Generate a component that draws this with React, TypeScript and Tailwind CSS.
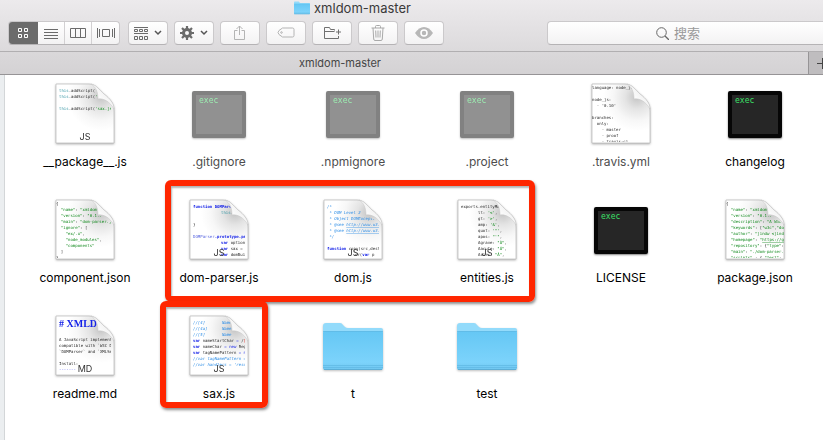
import type { ReactNode } from "react";

type Part = [text: string, color?: string, variant?: "bold" | "italic" | "underline"];
type Line = { x?: number; parts: Part[] };

type Preview = {
  x: number;
  y: number;
  right: number;
  lines: Line[];
  heading?: string;
  badge?: string;
};

type Item = {
  name: string;
  kind: "page" | "exec" | "folder";
  hidden?: boolean;
  preview?: Preview;
};

const INK = "#2a2a2a";
const GREEN = "#128a1e";
const BLUE = "#1522e8";
const SKY = "#2f8ee6";
const TEAL = "#3a97a5";

const blank: Line = { parts: [] };
const line = (...parts: Part[]): Line => ({ parts });
const at = (x: number, ...parts: Part[]): Line => ({ x, parts });

const items: Item[] = [
  {
    name: "__package__.js",
    kind: "page",
    preview: {
      x: 4, y: 9, right: 56, badge: "JS",
      lines: [
        line(["this", TEAL], [".addScript("], ["'\\", GREEN]),
        line(["this", TEAL], [".addScript("], ["'\\___.", GREEN]),
        blank,
        line(["this", TEAL], [".addScript("], ["'sax.js'", GREEN]),
      ],
    },
  },
  { name: ".gitignore", kind: "exec", hidden: true },
  { name: ".npmignore", kind: "exec", hidden: true },
  { name: ".project", kind: "exec", hidden: true },
  {
    name: ".travis.yml",
    kind: "page",
    hidden: true,
    preview: {
      x: 1, y: 6, right: 59,
      lines: [
        line(["language: node_js"]), blank,
        line(["node_js:"]), line(["  - '0.10'"]), blank,
        line(["branches:"]), line(["  only:"]), line(["    - master"]),
        line(["    - proof"]), line(["    - travis-ci"]),
      ],
    },
  },
  { name: "changelog", kind: "exec" },
  {
    name: "component.json",
    kind: "page",
    preview: {
      x: 1, y: 6, right: 59,
      lines: [
        line(["{"]),
        line(['  "name"', GREEN], [": "], ['"xmldom"', GREEN]),
        line(['  "version"', GREEN], [": "], ['"0.1.15"', GREEN], [","]),
        line(['  "main"', GREEN], [": "], ['"dom-parser.js"', GREEN]),
        line(['  "ignore"', GREEN], [": ["]),
        line(['    "ex/.x"', GREEN], [","]),
        line(['    "node_modules"', GREEN], [","]),
        line(['    "components"', GREEN]),
        line(["  ]"]),
        line(["}"]),
      ],
    },
  },
  {
    name: "dom-parser.js",
    kind: "page",
    preview: {
      x: 4, y: 9, right: 56, badge: "JS",
      lines: [
        line(["function DOMParser", BLUE, "bold"]),
        at(32, ["this", TEAL], [".options"]),
        blank,
        line(["}"]),
        blank,
        line(["DOMParser", "#5a68e0"], [".prototype.pa", BLUE, "bold"]),
        at(32, ["var", BLUE, "bold"], [" option"]),
        at(32, ["var", BLUE, "bold"], [" sax = "]),
        at(32, ["var", BLUE, "bold"], [" domBui"]),
      ],
    },
  },
  {
    name: "dom.js",
    kind: "page",
    preview: {
      x: 4, y: 9, right: 56, badge: "JS",
      lines: [
        line(["/*", SKY, "italic"]),
        line([" * DOM Level 2", SKY, "italic"]),
        line([" * Object DOMException", SKY, "italic"]),
        line([" * @see ", SKY, "italic"], ["http://www.w3.", SKY, "underline"]),
        line([" * @see ", SKY, "italic"], ["http://www.w3.", SKY, "underline"]),
        line([" */", SKY, "italic"]),
        blank,
        line(["function", BLUE, "bold"], [" copy(src,dest"]),
        at(32, ["or("], ["var", BLUE, "bold"], [" p "]),
      ],
    },
  },
  {
    name: "entities.js",
    kind: "page",
    preview: {
      x: 4, y: 9, right: 56, badge: "JS",
      lines: [
        line(["exports.entityMap"]),
        at(21, ["lt: "], ["'<'", GREEN], [","]),
        at(21, ["gt: "], ["'>'", GREEN], [","]),
        at(21, ["amp: "], ["'&'", GREEN], [","]),
        at(21, ["quot: "], ["'\"'", GREEN], [","]),
        at(21, ["apos: "], ['"\'"', GREEN], [","]),
        at(21, ["Agrave: "], ['"À"', GREEN], [","]),
        at(21, ["Aacute: "], ['"Á"', GREEN], [","]),
        at(21, ["Acirc: "], ['"Â"', GREEN], [","]),
      ],
    },
  },
  { name: "LICENSE", kind: "exec" },
  {
    name: "package.json",
    kind: "page",
    preview: {
      x: 1, y: 6, right: 59,
      lines: [
        line(["{"]),
        line(['  "name"', GREEN], [": "], ['"xmldom"', GREEN]),
        line(['  "version"', GREEN], [": "], ['"0.1.18"', GREEN], [","]),
        line(['  "description"', GREEN], [": "], ['"A W3C', GREEN]),
        line(['  "keywords"', GREEN], [": ["], ['"w3c"', GREEN], [","], ['"do', GREEN]),
        line(['  "author"', GREEN], [": "], ['"jindw <jind', GREEN]),
        line(['  "homepage"', GREEN], [": "], ['"', GREEN], ["https://g", GREEN, "underline"]),
        line(['  "repository"', GREEN], [": {"], ['"type"', GREEN], [":"]),
        line(['  "main"', GREEN], [": "], ['"./dom-parser.', GREEN]),
        line(['  "scripts"', GREEN], [" : { "], ['"test"', GREEN], [":"]),
      ],
    },
  },
  {
    name: "readme.md",
    kind: "page",
    preview: {
      x: 4, y: 26, right: 56, badge: "MD", heading: "# XMLDOM",
      lines: [
        line(["A JavaScript implement"]),
        line(["compatible with `W3C D"]),
        line(["`DOMParser` and `XMLSe"]),
        blank,
        line(["Install:"]),
        line(["-------", BLUE]),
      ],
    },
  },
  {
    name: "sax.js",
    kind: "page",
    preview: {
      x: 4, y: 9, right: 56, badge: "JS",
      lines: [
        line(["//[4]       NameSt", SKY, "italic"]),
        line(["//[4a]      NameChar", SKY, "italic"]),
        line(["//[5]       Name", SKY, "italic"]),
        line(["var", BLUE, "bold"], [" nameStartChar "], ["= ", BLUE], ["/", INK], ["[", "#e02a20"]),
        line(["var", BLUE, "bold"], [" nameChar "], ["= new", BLUE], [" Reg"]),
        line(["var", BLUE, "bold"], [" tagNamePattern "], ["= n", BLUE]),
        line(["//var tagNamePattern =", SKY, "italic"]),
        line(["//var handlers = 'reso", SKY, "italic"]),
      ],
    },
  },
  { name: "t", kind: "folder" },
  { name: "test", kind: "folder" },
];

function PageIcon({ id, preview }: { id: string; preview: Preview }) {
  const outline = "M1 1H34C40 1 44 6 49 11C55 16 59 20 59 28V60H1Z";
  return (
    <svg viewBox="0 0 60 62" className="h-[62px] w-[60px] drop-shadow-[0_1px_1px_rgba(0,0,0,0.3)]" aria-hidden="true">
      <defs>
        <clipPath id={`clip-${id}`}>
          <path d="M0 0H40L43 16L59 25V59H0Z" />
        </clipPath>
        <clipPath id={`width-${id}`}>
          <rect x="0" y="0" width={preview.right} height="59" />
        </clipPath>
        <radialGradient id={`shade-${id}`} gradientUnits="userSpaceOnUse" cx="46" cy="14" r="34">
          <stop offset="0" stopColor="#c4c4c4" />
          <stop offset="0.35" stopColor="#e4e4e4" />
          <stop offset="0.7" stopColor="#f7f7f7" />
          <stop offset="1" stopColor="#fff" />
        </radialGradient>
        <linearGradient id={`fold-${id}`} x1="0" y1="1" x2="0.7" y2="0.3">
          <stop offset="0" stopColor="#dcdcdc" />
          <stop offset="0.4" stopColor="#fff" />
          <stop offset="1" stopColor="#f0f0f0" />
        </linearGradient>
      </defs>
      <path d={outline} fill={`url(#shade-${id})`} stroke="#b8b8b8" strokeWidth="0.7" />
      <g clipPath={`url(#clip-${id})`}>
        <g clipPath={`url(#width-${id})`} fontSize="4" fill={INK} className="font-['DejaVu_Sans_Mono',monospace]">
          {preview.heading && (
            <text x="4" y="12" fontSize="10" fontWeight="700" fill={BLUE} className="font-['Liberation_Serif',serif]">
              {preview.heading}
            </text>
          )}
          {preview.lines.map((l, i) => (
            <text key={i} x={l.x ?? preview.x} y={preview.y + i * 6} className="whitespace-pre">
              {l.parts.map(([text, color, variant], j) => (
                <tspan
                  key={j}
                  fill={color ?? INK}
                  fontWeight={variant === "bold" ? 700 : 400}
                  fontStyle={variant === "italic" || (variant === "underline" && color === SKY) ? "italic" : "normal"}
                  textDecoration={variant === "underline" ? "underline" : "none"}
                >
                  {text}
                </tspan>
              ))}
            </text>
          ))}
        </g>
      </g>
      <path d="M36 1C41 4 43 9 43 16C49 15 55 19 59 26C59 20 55 16 49 11C44 6 41 2 36 1Z" fill={`url(#fold-${id})`} stroke="#c4c4c4" strokeWidth="0.5" />
      {preview.badge && (
        <text x="30" y="57" fontSize="9" textAnchor="middle" fill="#333" className="font-[Inter,sans-serif]">
          {preview.badge}
        </text>
      )}
    </svg>
  );
}

function ExecIcon() {
  return (
    <div className="mb-[7px] h-[47px] w-[54px] rounded-xs border-4 border-[#060606] bg-[#262626] pt-px pl-[3px] font-['DejaVu_Sans_Mono',monospace] text-[8px] leading-[10px] text-[#3be066] shadow-[0_1px_2px_rgba(0,0,0,0.5)]">
      exec
    </div>
  );
}

function FolderIcon({ id, className }: { id: string; className: string }) {
  return (
    <svg viewBox="0 0 60 48" className={className} aria-hidden="true">
      <defs>
        <linearGradient id={`folder-${id}`} x1="0" y1="0" x2="0" y2="1">
          <stop offset="0" stopColor="#65c7f4" />
          <stop offset="0.8" stopColor="#7cd3fb" />
          <stop offset="1" stopColor="#6fc6ef" />
        </linearGradient>
      </defs>
      <path d="M0 3Q0 0 3 0H17Q19 0 20 2L22 4Q23 5 25 5H58Q60 5 60 7V20H0Z" fill="#93dbfb" />
      <path d="M0 10Q0 8 2 8H58Q60 8 60 10V45Q60 47 58 47H2Q0 47 0 45Z" fill={`url(#folder-${id})`} />
      <path d="M0 8.5H60M0 42.5H60M0 44.5H60" stroke="#5fb7e2" strokeWidth="0.7" />
      <path d="M1 46.6H59" stroke="#56a5cc" strokeWidth="0.8" />
    </svg>
  );
}

function FileItem({ item }: { item: Item }) {
  return (
    <li className="flex h-[116px] flex-col items-center">
      <div className={`flex h-[62px] items-end ${item.hidden && item.kind === "exec" ? "opacity-50" : ""}`}>
        {item.kind === "page" && item.preview && <PageIcon id={item.name.replace(/\W/g, "")} preview={item.preview} />}
        {item.kind === "exec" && <ExecIcon />}
        {item.kind === "folder" && <FolderIcon id={item.name} className="mb-[6px] h-12 w-[60px] drop-shadow-[0_1px_1px_rgba(0,0,0,0.25)]" />}
      </div>
      <span className={`mt-[9px] text-[12px] leading-4 ${item.hidden ? "text-[#4d4d4d]" : "text-black"}`}>{item.name}</span>
    </li>
  );
}

const buttonSkin = "border border-[#cbc9cb] border-b-[#b5b3b5] bg-linear-to-b from-white to-[#f3f2f3]";

function ToolButton({ label, children }: { label: string; children: ReactNode }) {
  return (
    <button type="button" aria-label={label} className={`flex h-6 w-10 shrink-0 items-center justify-center rounded ${buttonSkin}`}>
      {children}
    </button>
  );
}

function Glyph({ w, h, color = "#6b6b6b", children }: { w: number; h: number; color?: string; children: ReactNode }) {
  return (
    <svg width={w} height={h} viewBox={`0 0 ${w} ${h}`} fill="none" stroke={color} aria-hidden="true" className="shrink-0">
      {children}
    </svg>
  );
}

function Chevron() {
  return (
    <Glyph w={8} h={6} color="#555">
      <path d="M1 1L4 4L7 1" strokeWidth="1.5" />
    </Glyph>
  );
}

function Toolbar() {
  return (
    <div className="flex items-center gap-[6px] pl-2">
      <div className={`mr-[2px] flex h-6 w-28 shrink-0 overflow-hidden rounded ${buttonSkin}`}>
        <button type="button" aria-label="Icons" aria-pressed="true" className="-my-px -ml-px flex w-[30px] items-center justify-center bg-[#6b6b6b]">
          <Glyph w={12} h={11} color="#fff">
            <path d="M1.5 .5h3v3h-3zM7.5 .5h3v3h-3zM1.5 6.5h3v3h-3zM7.5 6.5h3v3h-3z" />
          </Glyph>
        </button>
        <button type="button" aria-label="List" className="flex w-[27px] items-center justify-center border-r border-[#d2d0d2]">
          <Glyph w={14} h={11}>
            <path d="M0 1.5h14M0 4.5h14M0 7.5h14M0 10.5h14" />
          </Glyph>
        </button>
        <button type="button" aria-label="Columns" className="flex w-[27px] items-center justify-center border-r border-[#d2d0d2]">
          <Glyph w={16} h={10}>
            <path d="M.5 .5h15v9h-15zM5.5 .5v9M10.5 .5v9" />
          </Glyph>
        </button>
        <button type="button" aria-label="Cover Flow" className="flex flex-1 items-center justify-center">
          <Glyph w={18} h={10}>
            <path d="M.5 0v10M2.5 1v8M15.5 1v8M17.5 0v10M5.5 1.5h7v7h-7z" />
          </Glyph>
        </button>
      </div>
      <ToolButton label="Arrange">
        <span className="flex items-center gap-[6px]">
          <Glyph w={14} h={13}>
            <path d="M0 .5h14M0 6.5h14M.5 2.5h3v2h-3zM5.5 2.5h3v2h-3zM10.5 2.5h3v2h-3zM.5 9.5h3v3h-3zM5.5 9.5h3v3h-3zM10.5 9.5h3v3h-3z" />
          </Glyph>
          <Chevron />
        </span>
      </ToolButton>
      <ToolButton label="Actions">
        <span className="flex items-center gap-[6px]">
          <Glyph w={14} h={14}>
            <circle cx="7" cy="7" r="3.5" strokeWidth="3" />
            <path d="M7 0v3M7 11v3M0 7h3M11 7h3M2 2l2.2 2.2M9.8 9.8L12 12M12 2L9.8 4.2M4.2 9.8L2 12" strokeWidth="2.2" />
          </Glyph>
          <Chevron />
        </span>
      </ToolButton>
      <ToolButton label="Share">
        <Glyph w={12} h={16} color="#b4b4b4">
          <path d="M3.5 5.5h-3v9h10v-9h-3M5.5 10V1M2.5 4l3-3l3 3" />
        </Glyph>
      </ToolButton>
      <ToolButton label="Edit Tags">
        <Glyph w={18} h={12} color="#b4b4b4">
          <path d="M5.5 1h10q1.5 0 1.5 1.5v6q0 1.5-1.5 1.5h-10L2 7.5q-2-2 0-4z" />
          <circle cx="4.5" cy="5.5" r="0.8" />
        </Glyph>
      </ToolButton>
      <ToolButton label="New Folder">
        <Glyph w={18} h={13} color="#707070">
          <path d="M11.5 3.5V2.5H7.5L6.5 .5H1.5V11.5H15.5V9M1.5 4.5H11.5M15.5 2.5v5M13 5h5" />
        </Glyph>
      </ToolButton>
      <ToolButton label="Delete">
        <Glyph w={14} h={16} color="#a9a9a9">
          <path d="M.5 3h13M4.5 3V1.5q0-1 1-1h3q1 0 1 1V3M2 3l.7 11q.1 1.500 1.300 1.500h6q1.200 0 1.300-1.500L12 3M4.700 5.500l.3 7M7 5.500v7M9.300 5.500l-.3 7" />
        </Glyph>
      </ToolButton>
      <ToolButton label="Quick Look">
        <Glyph w={18} h={12} color="none">
          <path d="M0 6Q4 0 9 0T18 6Q14 12 9 12T0 6Z" fill="#b7b7b7" />
          <circle cx="9" cy="6" r="3" fill="#b7b7b7" stroke="#fff" strokeWidth="1.5" />
        </Glyph>
      </ToolButton>
      <label className={`ml-auto flex h-6 w-[276px] shrink-0 items-center gap-[5px] rounded-l border-r-0 pl-[108px] ${buttonSkin}`}>
        <Glyph w={13} h={13} color="#666">
          <circle cx="5.5" cy="5.5" r="4.8" />
          <path d="M9 9l4 4" strokeWidth="1.3" />
        </Glyph>
        <input
          type="search"
          aria-label="搜索"
          placeholder="搜索"
          className="w-full min-w-0 bg-transparent font-['Noto_Sans_CJK_SC',sans-serif] text-[13px] leading-5 outline-none placeholder:text-[#999]"
        />
      </label>
    </div>
  );
}

export default function App() {
  return (
    <div className="flex min-h-screen flex-col overflow-hidden bg-white font-[Inter,'Noto_Sans_CJK_SC',sans-serif]">
      <header className="border-b border-[#b1afb1] bg-linear-to-b from-[#eceaec] to-[#dcdadc] pb-[6px]">
        <div className="mb-[5px] flex h-4 items-center gap-1 pl-[294px]">
          <FolderIcon id="title" className="h-[14px] w-4" />
          <h1 className="text-[13px] leading-4 text-[#3a3a3a]">xmldom-master</h1>
        </div>
        <Toolbar />
      </header>
      <div role="tablist" className="flex h-[23px] border-b border-[#969496] bg-linear-to-b from-[#dad8da] to-[#d4d2d4]">
        <button type="button" role="tab" aria-selected="true" className="flex flex-1 items-center pl-[299px] text-[11px] text-[#454545]">
          xmldom-master
        </button>
        <button type="button" aria-label="New Tab" className="flex w-[15px] items-center justify-end overflow-hidden border-l border-[#969496] bg-[#bfbdbf]">
          <Glyph w={6} h={11} color="#444">
            <path d="M0 5.5h11M5.5 0v11" />
          </Glyph>
        </button>
      </div>
      <main className="flex flex-1">
        <div className="w-[5px] shrink-0 border-r border-[#d3d6d8] bg-[#ebeef0]" />
        <div className="relative flex-1">
          <ul className="grid grid-cols-[repeat(auto-fill,134px)] pt-2 pl-[13px]">
            {items.map((item) => (
              <FileItem key={item.name} item={item} />
            ))}
          </ul>
          <div className="pointer-events-none absolute top-[105px] left-[160px] h-[122px] w-[370px] rounded-md border-6 border-[#ff2600] shadow-[1px_2px_3px_rgba(0,0,0,0.45),inset_1px_2px_2px_rgba(0,0,0,0.3)]" />
          <div className="pointer-events-none absolute top-[226px] left-[155px] h-[107px] w-[108px] rounded-md border-6 border-[#ff2600] shadow-[1px_2px_3px_rgba(0,0,0,0.45),inset_1px_2px_2px_rgba(0,0,0,0.3)]" />
        </div>
      </main>
    </div>
  );
}
